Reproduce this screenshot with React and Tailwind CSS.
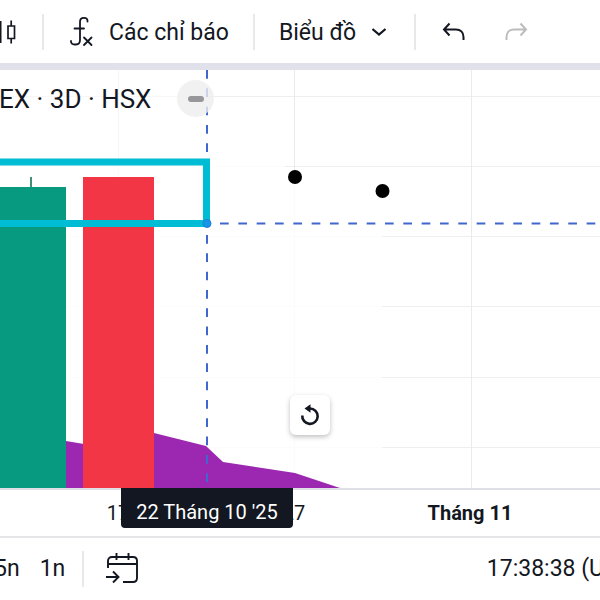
const PRICE_LINES = [26, 96, 166, 236, 307, 377];
const TIME_LINES = [118, 294, 471];

function Divider() {
  return <span className="h-9 w-0.5 shrink-0 bg-[#e9e9eb]" />;
}

function CandlesIcon() {
  return (
    <svg width="16" height="28" viewBox="0 0 16 28" fill="none" stroke="#131722" aria-hidden="true">
      <path d="M0.5 3v22" strokeWidth="2" />
      <path d="M8 8h6.500v12.500H8zM11.200 2.500V8M11.200 20.500v5" strokeWidth="1.700" />
    </svg>
  );
}

function IndicatorsIcon() {
  return (
    <svg width="24" height="32" viewBox="0 0 24 32" fill="none" stroke="#131722" strokeWidth="1.8" strokeLinecap="round" aria-hidden="true">
      <path d="M17.500 5.500V5c0-2-1.200-3.200-3.200-3.200h-.6c-2.200 0-3.700 1.500-3.700 4.200v18c0 3-1.500 4.500-4 4.500H4.500C2.200 28.500 1 27.300 1 25.500V25M4.500 12.500H14" />
      <path d="M14 21.500l7.500 7.500M21.500 21.500l-7.500 7.500" />
    </svg>
  );
}

function UndoIcon() {
  return (
    <svg width="24" height="20" viewBox="0 0 24 20" fill="none" stroke="currentColor" strokeWidth="2" aria-hidden="true">
      <path d="M7.500 1.500L2 7.500l5.500 6M2 7.500h12c4.500 0 7.500 3 7.500 7.500v3" />
    </svg>
  );
}

function RedoIcon() {
  return (
    <svg width="24" height="20" viewBox="0 0 24 20" fill="none" stroke="currentColor" strokeWidth="2" aria-hidden="true">
      <path d="M16.500 1.500l5.500 6-5.500 6M22 7.500H10c-4.500 0-7.500 3-7.500 7.500v3" />
    </svg>
  );
}

function GoToDateIcon() {
  return (
    <svg width="32" height="32" viewBox="0 0 32 32" fill="none" stroke="#131722" strokeWidth="1.9" aria-hidden="true">
      <path d="M2 15V8c0-2.500 1.500-4 4-4h21c2.500 0 4 1.500 4 4v17c0 2.500-1.500 4-4 4H17M2 11h29M10.500 0v7M22.500 0v7" />
      <path d="M0 24h12M7 18.500l5.500 5.500L7 29.500" />
    </svg>
  );
}

function Toolbar() {
  return (
    <header className="flex h-[63px] items-center overflow-hidden text-[23px] leading-9 whitespace-nowrap">
      <button type="button" aria-label="Nến" className="shrink-0">
        <CandlesIcon />
      </button>
      <div className="ml-[26px] flex items-center">
        <Divider />
        <button type="button" className="mr-6 ml-[26px] flex items-center gap-[15px]">
          <IndicatorsIcon />
          <span className="pt-0.5">Các chỉ báo</span>
        </button>
        <Divider />
        <button type="button" className="mr-7 ml-6 flex items-center gap-4">
          <span className="pt-0.5">Biểu đồ</span>
          <svg width="14" height="8" viewBox="0 0 14 8" fill="none" stroke="#131722" strokeWidth="2.200" aria-hidden="true">
            <path d="M0.500 1L7 6.500 13.500 1" />
          </svg>
        </button>
        <Divider />
        <button type="button" aria-label="Hoàn tác" className="ml-[26px]">
          <UndoIcon />
        </button>
        <button type="button" aria-label="Làm lại" className="ml-[38px] text-[#bcbcbe]">
          <RedoIcon />
        </button>
      </div>
    </header>
  );
}

function Chart() {
  return (
    <section className="relative h-[418px] overflow-hidden">
      <svg width="100%" height="418" className="block" aria-hidden="true">
        {PRICE_LINES.map((y) => (
          <rect key={y} x="0" y={y} width="100%" height="1" fill="#efeff0" />
        ))}
        {TIME_LINES.map((x) => (
          <rect key={x} x={x} y="0" width="1" height="418" fill="#ebebed" />
        ))}
        <path d="M0 0H207V87H0Z" fill="#fff" opacity="0.5" />
        <path d="M0 87H285V107H295L382 121V418H0Z" fill="#fff" opacity="0.8" />
        <path d="M0 360L66 371 84 374V363H154L206 376 223 392 295 403 340 418H0Z" fill="#9c27b0" />
        <rect x="30" y="107" width="2" height="12" fill="#3f8f79" />
        <rect x="0" y="117" width="66" height="301" fill="#089981" />
        <rect x="83" y="107" width="71" height="311" fill="#f23645" />
        <path d="M207 0V418" stroke="#4067cf" strokeWidth="2" strokeDasharray="8.700 9.630" />
        <line x1="220" x2="100%" y1="153.500" y2="153.500" stroke="#4067cf" strokeWidth="2" strokeDasharray="8.700 9.630" />
        <path d="M-10 92H206.500V153.500H-10" fill="none" stroke="#00bcd4" strokeWidth="7" />
        <circle cx="207" cy="153.500" r="4" fill="#1597e5" stroke="#2479e0" />
        <circle cx="295" cy="107" r="7" />
        <circle cx="382.500" cy="121" r="7" />
      </svg>
      <div className="absolute top-2.5 left-0 flex h-[37px] items-center gap-[26px] text-[26px] whitespace-nowrap">
        <h1 className="-ml-px pt-0.5">EX · 3D · HSX</h1>
        <button type="button" aria-label="Thu gọn" className="flex size-[37px] items-center justify-center rounded-full bg-[#eeeeef]/80">
          <span className="h-1.5 w-4 rounded-full bg-[#97979b]" />
        </button>
      </div>
      <button type="button" aria-label="Đặt lại biểu đồ" className="absolute top-[325px] left-[290px] flex size-10 items-center justify-center rounded-md bg-white shadow-[0_2px_5px_rgba(0,0,0,0.25)]">
        <svg width="20" height="22" viewBox="0 0 20 22" fill="none" stroke="#131722" strokeWidth="2.600" aria-hidden="true">
          <path d="M2.300 11.500A7.700 7.700 0 1 0 10 4.500H8" />
          <path d="M10.500 0.300V8.700L4.500 4.500Z" fill="#131722" stroke="none" />
        </svg>
      </button>
    </section>
  );
}

function TimeAxis() {
  return (
    <section className="relative h-12 border-t-2 border-[#dfdfe6]">
      <svg width="100%" height="44" className="block text-xl" fill="#131722" textAnchor="middle">
        <text x="118" y="30">17</text>
        <text x="294" y="30">27</text>
        <text x="470" y="30" className="font-bold">Tháng 11</text>
      </svg>
      <div className="absolute -top-0.5 left-[121px] flex h-10 w-[172px] items-center justify-center rounded-b bg-[#131722] pt-2 text-xl whitespace-nowrap text-white">
        22 Tháng 10 '25
      </div>
    </section>
  );
}

function Footer() {
  return (
    <footer className="flex h-16 items-center overflow-hidden border-t-2 border-[#e6e6e8] text-[23px] leading-9 whitespace-nowrap">
      <button type="button" className="-ml-1.5 shrink-0">5n</button>
      <button type="button" className="mr-[17px] ml-5 shrink-0">1n</button>
      <Divider />
      <button type="button" aria-label="Đi đến ngày" className="ml-[22px] shrink-0">
        <GoToDateIcon />
      </button>
      <button type="button" className="-mr-1 ml-auto shrink-0">17:38:38 (U</button>
    </footer>
  );
}

export default function App() {
  return (
    <main className="min-h-screen overflow-hidden bg-white font-[Roboto,sans-serif] text-[#131722]">
      <Toolbar />
      <div className="h-[7px] bg-[#e0e1eb]" />
      <Chart />
      <TimeAxis />
      <Footer />
    </main>
  );
}
